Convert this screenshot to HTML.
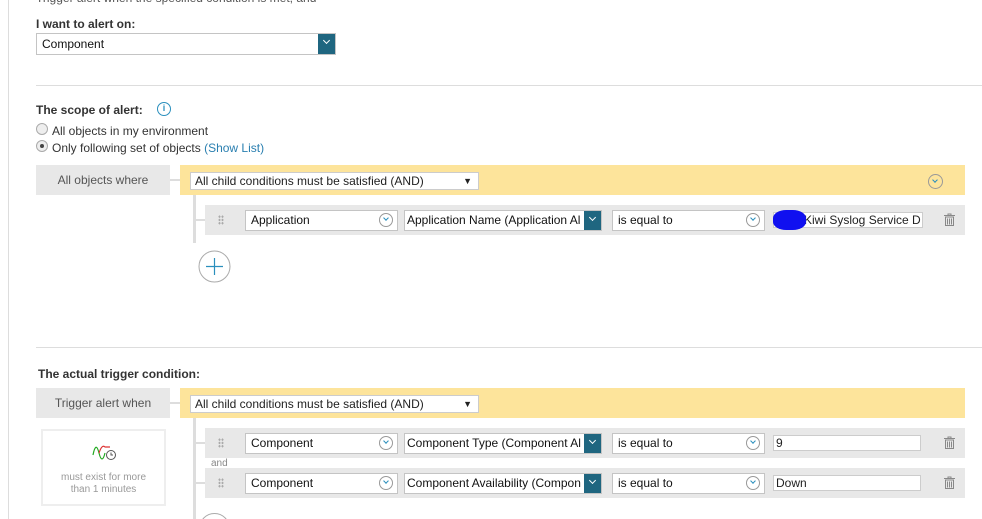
<!DOCTYPE html>
<html style="width:982px;height:519px;overflow:hidden"><head><style>
*{box-sizing:border-box;margin:0;padding:0}
body{width:982px;height:519px;overflow:hidden;background:#fff;position:relative;font-family:"Liberation Sans",sans-serif;font-size:12px;color:#222}
.a{position:absolute}
.b{font-weight:bold;font-size:12px;color:#333}
.sel{position:absolute;background:#fff;border:1px solid #c4c4c4;height:21px;font-size:12px;line-height:19px;padding-left:5px;white-space:nowrap;overflow:hidden;color:#111}
.cc{position:absolute;width:14px;height:14px;border:1px solid #999;border-radius:50%;top:2px;right:4px}
.cc:after{content:"";position:absolute;left:4px;top:2px;width:3px;height:3px;border-right:1.3px solid #2a8fbd;border-bottom:1.3px solid #2a8fbd;transform:rotate(45deg)}
.bb{position:absolute;top:-1px;right:-1px;width:18px;height:21px;background:#1f6680}
.bb:after{content:"";position:absolute;left:6px;top:5px;width:4px;height:4px;border-right:1.3px solid #fff;border-bottom:1.3px solid #fff;transform:rotate(45deg)}
.row{position:absolute;left:205px;width:760px;height:30px;background:#e8e8e8}
.dots{position:absolute;left:13px;top:10px;width:6px;height:10px;background:radial-gradient(circle,#aaa 1px,transparent 1.2px) 0 0/3px 3.3px}
.trash{position:absolute;left:739px;top:8px;width:11px;height:13px}
.gbox{position:absolute;left:36px;width:134px;height:30px;background:#e8e8e8;color:#555;text-align:center;line-height:30px;font-size:12px}
.yel{position:absolute;left:180px;width:785px;height:30px;background:#fde49b}
.ys{position:absolute;left:10px;top:7px;width:289px;height:18px;background:#fff;border:1px solid #ccc;font-size:12px;line-height:16px;padding-left:4px}
.ys:after{content:"▼";position:absolute;right:6px;top:0;font-size:9px}
.inp{position:absolute;background:#fff;border:1px solid #ccc;height:16px;font-size:12px;line-height:14px;padding-left:2px;overflow:hidden;white-space:nowrap}
</style></head><body>
<div class="a" style="left:8px;top:0;width:1px;height:519px;background:#ddd"></div>
<div class="a" style="left:36px;top:-9px;color:#555">Trigger alert when the specified condition is met, and</div>
<div class="a b" style="left:36px;top:17px">I want to alert on:</div>
<div class="sel" style="left:36px;top:33px;width:300px;height:22px;line-height:20px">Component<div class="bb" style="height:22px"></div></div>
<div class="a" style="left:36px;top:85px;width:946px;height:1px;background:#ddd"></div>
<div class="a b" style="left:36px;top:103px">The scope of alert:</div>
<div class="a" style="left:157px;top:102px;width:14px;height:14px;border:1.3px solid #2a8fbd;border-radius:50%;color:#2a8fbd;font-size:9px;text-align:center;line-height:11px;font-weight:bold">i</div>
<div class="a" style="left:36px;top:123px;width:12px;height:12px;border:1px solid #aaa;border-radius:50%;background:#eee"></div>
<div class="a" style="left:52px;top:124px;color:#333">All objects in my environment</div>
<div class="a" style="left:36px;top:140px;width:12px;height:12px;border:1px solid #aaa;border-radius:50%;background:#eee"><div class="a" style="left:3px;top:3px;width:4px;height:4px;border-radius:50%;background:#444"></div></div>
<div class="a" style="left:52px;top:141px;color:#333">Only following set of objects <span style="color:#2a7fb0">(Show List)</span></div>

<div class="gbox" style="top:165px">All objects where</div>
<div class="a" style="left:170px;top:179px;width:10px;height:2px;background:#ddd"></div>
<div class="yel" style="top:165px"><div class="ys">All child conditions must be satisfied (AND)</div>
<div class="a" style="left:748px;top:9px;width:15px;height:15px;border:1px solid #999;border-radius:50%"><div class="a" style="left:4px;top:3px;width:4px;height:4px;border-right:1.3px solid #2a8fbd;border-bottom:1.3px solid #2a8fbd;transform:rotate(45deg)"></div></div></div>
<div class="a" style="left:193px;top:195px;width:3px;height:48px;background:#ddd"></div>
<div class="a" style="left:196px;top:219px;width:9px;height:2px;background:#ddd"></div>
<div class="row" style="top:205px"><div class="dots"></div>
<div class="sel" style="left:40px;top:5px;width:153px">Application<div class="cc"></div></div>
<div class="sel" style="left:199px;top:5px;width:198px;padding-left:2px">Application Name (Application Al<div class="bb"></div></div>
<div class="sel" style="left:407px;top:5px;width:153px">is equal to<div class="cc"></div></div>
<div class="inp" style="left:568px;top:7px;width:150px;padding-left:30px">Kiwi Syslog Service D</div>
<div class="a" style="left:568px;top:5px;width:33px;height:20px;background:#1010f0;border-radius:40%"></div>
<svg class="trash" viewBox="0 0 11 13"><path d="M0 2.5h11M4 2.5V1h3v1.5M1.5 4h8v8.5h-8zM3.5 5.5v6M5.5 5.5v6M7.5 5.5v6" stroke="#888" fill="none" stroke-width="1"/></svg></div>
<svg class="a" style="left:198px;top:250px" width="33" height="33" viewBox="0 0 33 33"><circle cx="16.5" cy="16.5" r="15.5" fill="#fff" stroke="#aaa"/><path d="M16.5 8v17M8 16.5h17" stroke="#2a8fbd" stroke-width="1.2"/></svg>

<div class="a" style="left:36px;top:347px;width:946px;height:1px;background:#ddd"></div>
<div class="a b" style="left:38px;top:367px">The actual trigger condition:</div>
<div class="gbox" style="top:388px">Trigger alert when</div>
<div class="a" style="left:170px;top:402px;width:10px;height:2px;background:#ddd"></div>
<div class="yel" style="top:388px"><div class="ys">All child conditions must be satisfied (AND)</div></div>
<div class="a" style="left:193px;top:418px;width:3px;height:101px;background:#ddd"></div>
<div class="a" style="left:196px;top:442px;width:9px;height:2px;background:#ddd"></div>
<div class="a" style="left:196px;top:482px;width:9px;height:2px;background:#ddd"></div>
<div class="a" style="left:41px;top:429px;width:125px;height:77px;border:2px solid #eee;text-align:center;color:#999;font-size:10px;line-height:12px;padding-top:41px">must exist for more<br>than 1 minutes
<svg class="a" style="left:49px;top:14px" width="26" height="18" viewBox="0 0 26 18"><path d="M1 10C3 0 5 0 7 8S11 16 13 8" stroke="#2a2" fill="none" stroke-width="1.2"/><path d="M7 8C9 2 11 0 13 2L18 2" stroke="#d33" fill="none" stroke-width="1.2"/><circle cx="19" cy="10" r="4.5" fill="#fff" stroke="#555"/><path d="M19 7.5V10h2" stroke="#555" fill="none"/></svg></div>
<div class="row" style="top:428px"><div class="dots"></div>
<div class="sel" style="left:40px;top:5px;width:153px">Component<div class="cc"></div></div>
<div class="sel" style="left:199px;top:5px;width:198px;padding-left:2px">Component Type (Component Al<div class="bb"></div></div>
<div class="sel" style="left:407px;top:5px;width:153px">is equal to<div class="cc"></div></div>
<div class="inp" style="left:568px;top:7px;width:148px">9</div>
<svg class="trash" viewBox="0 0 11 13"><path d="M0 2.5h11M4 2.5V1h3v1.5M1.5 4h8v8.5h-8zM3.5 5.5v6M5.5 5.5v6M7.5 5.5v6" stroke="#888" fill="none" stroke-width="1"/></svg></div>
<div class="a" style="left:211px;top:458px;font-size:10px;color:#888">and</div>
<div class="row" style="top:468px"><div class="dots"></div>
<div class="sel" style="left:40px;top:5px;width:153px">Component<div class="cc"></div></div>
<div class="sel" style="left:199px;top:5px;width:198px;padding-left:2px">Component Availability (Compon<div class="bb"></div></div>
<div class="sel" style="left:407px;top:5px;width:153px">is equal to<div class="cc"></div></div>
<div class="inp" style="left:568px;top:7px;width:148px">Down</div>
<svg class="trash" viewBox="0 0 11 13"><path d="M0 2.5h11M4 2.5V1h3v1.5M1.5 4h8v8.5h-8zM3.5 5.5v6M5.5 5.5v6M7.5 5.5v6" stroke="#888" fill="none" stroke-width="1"/></svg></div>
<div class="a" style="left:199px;top:513px;width:31px;height:31px;border:1px solid #aaa;border-radius:50%"></div>
</body></html>
